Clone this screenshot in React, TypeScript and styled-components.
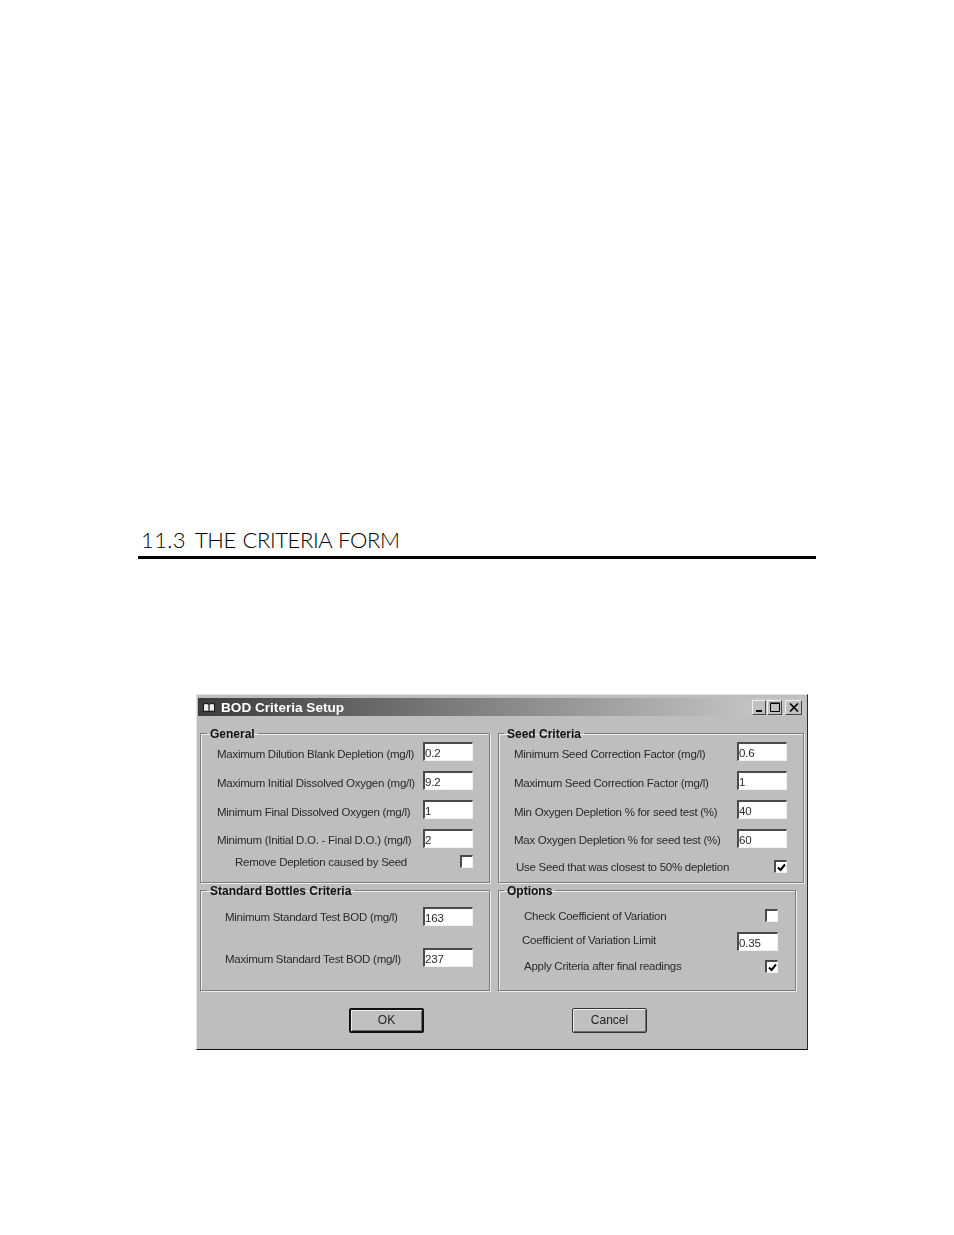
import React from "react";
import styled, { createGlobalStyle } from "styled-components";

const GlobalStyle = createGlobalStyle`
  html, body {
    margin: 0;
    padding: 0;
    background: #ffffff;
  }
`;

const Page = styled.div`
  display: flex;
  flex-direction: column;
  width: 954px;
  height: 1235px;
  padding-top: 526px;
  box-sizing: border-box;
  overflow: hidden;
  background: #ffffff;
`;

const Heading = styled.h2`
  width: 678px;
  height: 33px;
  margin: 0 0 0 138px;
  padding-left: 3px;
  box-sizing: border-box;
  border-bottom: 3px solid #000;
  font-family: "Lato", "Liberation Sans", sans-serif;
  font-size: 22px;
  font-weight: 300;
  line-height: 28px;
  letter-spacing: -0.4px;
  word-spacing: 1px;
  color: #000;
`;

const HeadingNumber = styled.span`
  margin-right: 9px;
  letter-spacing: 0.4px;
`;

const Window = styled.div`
  width: 612px;
  margin: 135px 0 0 196px;
  padding: 3px 1px 16px;
  box-sizing: border-box;
  background: #bebebe;
  border: 1px solid #e4e4e4;
  border-right-color: #2a2a2a;
  border-bottom-color: #111;
  font-family: "Liberation Sans", Arial, sans-serif;
  font-size: 12px;
  color: #2a2a2a;
  filter: blur(0.35px);
`;

const TitleBar = styled.div`
  display: flex;
  align-items: center;
  height: 18px;
  padding: 0 4px 0 5px;
  background: linear-gradient(90deg, #3c3c3c 0%, #6a6a6a 30%, #c4c4c4 92%);
`;

const TitleText = styled.span`
  margin-left: 6px;
  flex: 1;
  font-size: 13.6px;
  font-weight: 700;
  color: #fff;
`;

const CaptionButtons = styled.div`
  display: flex;
`;

const CaptionButton = styled.div<{ $gap?: number; $width: number }>`
  display: flex;
  align-items: center;
  justify-content: center;
  width: ${(p) => p.$width}px;
  height: 15px;
  margin-left: ${(p) => p.$gap ?? 0}px;
  background: #c0c0c0;
  border: 1px solid;
  border-color: #f0f0f0 #444 #444 #f0f0f0;
  box-sizing: border-box;
`;

const Panels = styled.div`
  display: grid;
  grid-template-columns: 290px 306px;
  column-gap: 8px;
  margin: 10px 0 0 2px;
`;

const Group = styled.fieldset<{ $height: number; $right?: number; $left?: number; $width: number }>`
  display: flex;
  flex-direction: column;
  min-width: 0;
  height: ${(p) => p.$height}px;
  width: ${(p) => p.$width}px;
  margin: 0;
  padding: 2px ${(p) => p.$right ?? 16}px 0 ${(p) => p.$left ?? 16}px;
  box-sizing: border-box;
  border: 1px solid #7e7e7e;
  box-shadow: 1px 1px 0 #ececec, inset 1px 1px 0 #ececec;
`;

const GroupTitle = styled.legend`
  margin-left: -10px;
  padding: 0 3px;
  height: 14px;
  font-size: 12px;
  font-weight: 700;
  line-height: 16px;
  color: #111;
`;

const Row = styled.div<{ $top?: number; $height?: number }>`
  display: flex;
  align-items: center;
  justify-content: space-between;
  height: ${(p) => p.$height ?? 19}px;
  margin-top: ${(p) => p.$top ?? 0}px;
`;

const Label = styled.span<{ $indent?: number; $lift?: number; $drop?: number }>`
  margin-left: ${(p) => p.$indent ?? 0}px;
  margin-top: ${(p) => p.$drop ?? 0}px;
  margin-bottom: ${(p) => p.$lift ?? 0}px;
  font-size: 11.5px;
  letter-spacing: -0.27px;
  white-space: nowrap;
`;

const TextField = styled.input<{ $width?: number }>`
  width: ${(p) => p.$width ?? 50}px;
  height: 19px;
  padding: 1px 0 0 0;
  box-sizing: border-box;
  background: #fff;
  border: 2px solid;
  border-color: #4a4a4a #f2f2f2 #f2f2f2 #4a4a4a;
  border-right-width: 1px;
  border-bottom-width: 1px;
  outline: none;
  font-family: "Liberation Sans", Arial, sans-serif;
  font-size: 11.5px;
  letter-spacing: -0.2px;
  color: #2a2a2a;
`;

const CheckBox = styled.span`
  display: flex;
  align-items: center;
  justify-content: center;
  width: 13px;
  height: 13px;
  box-sizing: border-box;
  background: #fff;
  border: 2px solid;
  border-color: #4a4a4a #f2f2f2 #f2f2f2 #4a4a4a;
  border-right-width: 1px;
  border-bottom-width: 1px;
`;

const ButtonRow = styled.div`
  display: flex;
  gap: 148px;
  margin-top: 17px;
  padding-left: 151px;
`;

const PushButton = styled.button<{ $default?: boolean }>`
  width: 75px;
  height: 25px;
  padding: 0 0 2px;
  background: #c0c0c0;
  border: ${(p) => (p.$default ? "2px solid #111" : "1px solid #333")};
  border-radius: 2px;
  box-shadow: inset 1px 1px 0 #f0f0f0, inset -1px -1px 0 #6e6e6e;
  font-family: "Liberation Sans", Arial, sans-serif;
  font-size: 12px;
  color: #222;
`;

const BookIcon = () => (
  <svg width="12" height="11" viewBox="0 0 12 11">
    <path d="M0 2q3-2 6 0 3-2 6 0v8q-3-1-6 0-3-1-6 0z" fill="#161616" />
    <path d="M1 2.5q2-1 4.4 0v6.5Q3 8 1 9zM6.6 2.5q2.4-1 4.4 0V9q-2-1-4.4 0z" fill="#ececec" />
  </svg>
);

const Minimize = () => (
  <svg width="9" height="9" viewBox="0 0 9 9">
    <path d="M1 7h6v2H1z" fill="#000" />
  </svg>
);

const Maximize = () => (
  <svg width="10" height="10" viewBox="0 0 10 10">
    <path d="M0.5 1.5h9v8h-9z" fill="none" stroke="#000" />
    <path d="M0 1h10" stroke="#000" />
  </svg>
);

const Close = () => (
  <svg width="10" height="9" viewBox="0 0 10 9">
    <path d="M1 0.5l8 8M9 0.5l-8 8" stroke="#000" strokeWidth="1.6" />
  </svg>
);

const Check = () => (
  <svg width="9" height="9" viewBox="0 0 9 9">
    <path d="M1 4.5l2.5 2.5L8 1.5" fill="none" stroke="#000" strokeWidth="2" />
  </svg>
);

const generalRows = [
  ["Maximum Dilution Blank Depletion (mg/l)", "0.2"],
  ["Maximum Initial Dissolved Oxygen (mg/l)", "9.2"],
  ["Minimum Final Dissolved Oxygen (mg/l)", "1"],
  ["Minimum (Initial D.O. - Final D.O.) (mg/l)", "2"],
];

const seedRows = [
  ["Minimum Seed Correction Factor (mg/l)", "0.6"],
  ["Maximum Seed Correction Factor (mg/l)", "1"],
  ["Min Oxygen Depletion % for seed test (%)", "40"],
  ["Max Oxygen Depletion % for seed test (%)", "60"],
];

const App = () => {
  return (
    <Page>
      <GlobalStyle />
      <Heading>
        <HeadingNumber>11.3</HeadingNumber>THE CRITERIA FORM
      </Heading>
      <Window>
        <TitleBar>
          <BookIcon />
          <TitleText>BOD Criteria Setup</TitleText>
          <CaptionButtons>
            <CaptionButton $width={14}><Minimize /></CaptionButton>
            <CaptionButton $width={15} $gap={1}><Maximize /></CaptionButton>
            <CaptionButton $width={17} $gap={3}><Close /></CaptionButton>
          </CaptionButtons>
        </TitleBar>

        <Panels>
          <Group $height={157} $width={290}>
            <GroupTitle>General</GroupTitle>
            {generalRows.map(([label, value], i) => (
              <Row key={label} $top={i ? 10 : 0}>
                <Label $drop={i === 3 ? 2 : 4}>{label}</Label>
                <TextField readOnly value={value} />
              </Row>
            ))}
            <Row $top={7} $height={13}>
              <Label $indent={18}>Remove Depletion caused by Seed</Label>
              <CheckBox />
            </Row>
          </Group>

          <Group $height={157} $width={306} $left={15}>
            <GroupTitle>Seed Criteria</GroupTitle>
            {seedRows.map(([label, value], i) => (
              <Row key={label} $top={i ? 10 : 0}>
                <Label $drop={i === 3 ? 2 : 4}>{label}</Label>
                <TextField readOnly value={value} />
              </Row>
            ))}
            <Row $top={12} $height={13}>
              <Label $indent={2}>Use Seed that was closest to 50% depletion</Label>
              <CheckBox><Check /></CheckBox>
            </Row>
          </Group>

          <Group $height={108} $width={290}>
            <GroupTitle>Standard Bottles Criteria</GroupTitle>
            <Row $top={8}>
              <Label $indent={8}>Minimum Standard Test BOD (mg/l)</Label>
              <TextField readOnly value="163" />
            </Row>
            <Row $top={22}>
              <Label $indent={8} $drop={2}>Maximum Standard Test BOD (mg/l)</Label>
              <TextField readOnly value="237" />
            </Row>
          </Group>

          <Group $height={108} $width={298} $right={17} $left={15}>
            <GroupTitle>Options</GroupTitle>
            <Row $top={10} $height={13}>
              <Label $indent={10}>Check Coefficient of Variation</Label>
              <CheckBox />
            </Row>
            <Row $top={10}>
              <Label $indent={8} $lift={4}>Coefficient of Variation Limit</Label>
              <TextField readOnly value="0.35" $width={41} />
            </Row>
            <Row $top={9} $height={13}>
              <Label $indent={10} $lift={2}>Apply Criteria after final readings</Label>
              <CheckBox><Check /></CheckBox>
            </Row>
          </Group>
        </Panels>

        <ButtonRow>
          <PushButton $default>OK</PushButton>
          <PushButton>Cancel</PushButton>
        </ButtonRow>
      </Window>
    </Page>
  );
};

export default App;
